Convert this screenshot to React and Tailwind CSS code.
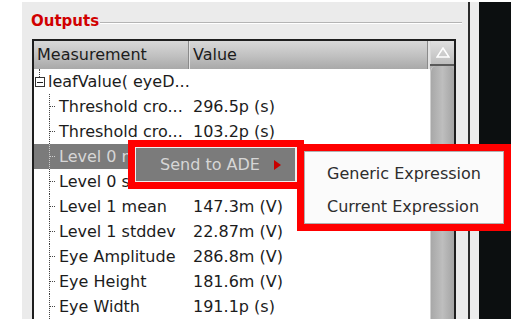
import React from "react";

const rows = [
  ["Threshold cro...", "296.5p (s)"],
  ["Threshold cro...", "103.2p (s)"],
  ["Level 0 mean", "", true],
  ["Level 0 stddev", ""],
  ["Level 1 mean", "147.3m (V)"],
  ["Level 1 stddev", "22.87m (V)"],
  ["Eye Amplitude", "286.8m (V)"],
  ["Eye Height", "181.6m (V)"],
  ["Eye Width", "191.1p (s)"],
];

function ChildRow({ name, value, sel }) {
  return (
    <div className={`flex h-[25px] items-center ${sel ? "bg-[#7b7b7b] text-[#d6d6d6]" : "text-[#1c1c1c]"}`}>
      <div className="relative w-[25px] h-full shrink-0">
        <div className={`absolute left-[15px] top-0 h-full border-l border-dotted ${sel ? "border-[#d0d0d0]" : "border-[#444]"}`} />
        <div className={`absolute left-[16px] top-[12px] w-[5px] border-t border-dotted ${sel ? "border-[#d0d0d0]" : "border-[#444]"}`} />
      </div>
      <div className="w-[129px] shrink-0 whitespace-nowrap">{name}</div>
      <div className="pl-[5px] whitespace-nowrap">{value}</div>
    </div>
  );
}

export default function App() {
  return (
    <div
      className="w-[524px] h-[319px] overflow-hidden bg-white flex pt-[2px] text-[16px] leading-none"
      style={{ fontFamily: '"DejaVu Sans", sans-serif' }}
    >
      <div className="w-[22px] shrink-0 bg-white" />
      {/* main panel */}
      <div className="w-[446px] shrink-0 bg-[#ebebeb] relative flex flex-col">
        {/* title */}
        <div className="h-[38px] flex items-start pl-[9px] pt-[12px]">
          <span className="text-[15px] font-bold text-[#d10000] leading-none">Outputs</span>
          <div className="flex-1 mt-[8px] mr-[6px] ml-[1px] border-t border-[#b4b4b4] border-b border-b-white h-[2px]" />
        </div>
        {/* table */}
        <div className="ml-[10px] w-[424px] flex-1 border-l-2 border-t-2 border-r-2 border-[#1e1e1e] bg-white flex">
          <div className="w-[396px] flex flex-col">
            <div className="h-[28px] shrink-0 flex bg-gradient-to-b from-[#d8d8d8] via-[#c2c2c2] to-[#a9a9a9] text-[#1c1c1c]">
              <div className="w-[154px] flex items-center pl-[3px]">Measurement</div>
              <div className="w-[1px] bg-[#8a8a8a]" />
              <div className="w-[1px] bg-[#e2e2e2]" />
              <div className="flex-1 flex items-center pl-[3px]">Value</div>
              <div className="w-[1px] bg-[#8a8a8a]" />
              <div className="w-[2px] bg-[#e2e2e2]" />
            </div>
            {/* root row */}
            <div className="flex h-[25px] items-center text-[#1c1c1c]">
              <div className="relative w-[14px] h-full shrink-0">
                <div className="absolute left-[5px] top-0 h-[8px] border-l border-dotted border-[#444]" />
                <div className="absolute left-[1px] top-[8px] w-[10px] h-[10px] border border-[#333] bg-white flex items-center justify-center">
                  <div className="w-[6px] h-[1px] bg-[#222]" />
                </div>
              </div>
              <div className="whitespace-nowrap">leafValue( eyeD...</div>
            </div>
            {rows.map(([n, v, s], i) => (
              <ChildRow key={i} name={n} value={v} sel={s} />
            ))}
          </div>
          {/* scrollbar */}
          <div className="w-[24px] flex flex-col bg-[#b3b3b3]">
            <div className="h-[23px] shrink-0 bg-gradient-to-b from-[#e0e0e0] to-[#bdbdbd] flex items-center justify-center border-l border-[#d8d8d8]">
              <svg width="14" height="11" viewBox="0 0 14 11">
                <path d="M7 1 L13 10 L1 10 Z" fill="none" stroke="#ffffff" strokeWidth="1.5" />
              </svg>
            </div>
            <div className="h-[2px] bg-[#5a5a5a]" />
            <div className="flex-1 rounded-t-[6px] bg-gradient-to-r from-[#a8a8a8] via-[#bebebe] to-[#a4a4a4] border-l border-[#d0d0d0]" />
          </div>
        </div>
      </div>
      <div className="w-[2px] shrink-0 bg-[#2a2a2a]" />
      <div className="w-[9px] shrink-0 bg-[#ececec]" />
      <div className="w-[32px] shrink-0 bg-[#0c0f10]" />
      <div className="flex-1 bg-white" />

      {/* context menu */}
      <div className="absolute left-[128px] top-[140px] w-[176px] h-[49px] border-[7px] border-[#ff0000] bg-[#f0f0f0] p-[1px] pr-[2px]">
        <div className="h-full bg-[#7b7b7b] flex items-center pl-[24px] pr-[14px] text-[#d6d6d6]">
          <span className="flex-1 whitespace-nowrap">Send to ADE</span>
          <svg width="7" height="10" viewBox="0 0 7 10">
            <path d="M0 0 L7 5 L0 10 Z" fill="#c80000" />
          </svg>
        </div>
      </div>
      {/* submenu */}
      <div className="absolute left-[297px] top-[144px] w-[214px] h-[87px] border-[7px] border-[#ff0000] bg-[#fbfbfb]">
        <div className="h-full border border-[#b0b0b0] pt-[5px] text-[#2e2e2e]">
          <div className="h-[33px] flex items-center pl-[22px] whitespace-nowrap">Generic Expression</div>
          <div className="h-[33px] flex items-center pl-[22px] whitespace-nowrap">Current Expression</div>
        </div>
      </div>
    </div>
  );
}
